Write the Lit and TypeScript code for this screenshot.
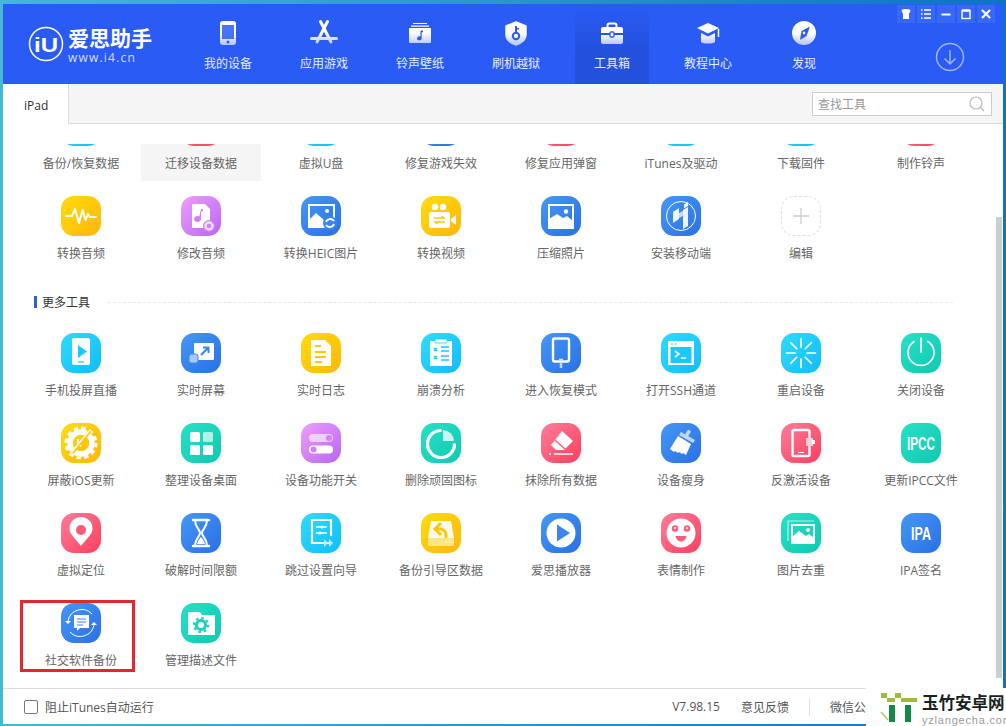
import { LitElement, html, css, svg } from 'lit';
import { customElement } from 'lit/decorators.js';

const NAV_BLUE = '#2a5cf5';

// header icons, drawn in a 32x32 box; url(#nf) is the white to lavender fade
const navIcons: Record<string, any> = {
  phone: svg`<rect x="8" y="4" width="16" height="24" rx="3" fill="url(#nf)"/>
    <rect x="10" y="8" width="12" height="14" fill="${NAV_BLUE}" opacity=".85"/>
    <circle cx="16" cy="25" r="1.5" fill="${NAV_BLUE}"/>`,
  apps: svg`<path d="M12.5 4.5 23 25M19.5 4.5 9 25M3.5 21.5h25" stroke="url(#nf)" stroke-width="3" stroke-linecap="round" fill="none"/>`,
  music: svg`<path d="M9 6h14v1H9zM7 8.500h18v1.200H7z" fill="url(#nf)"/>
    <rect x="5" y="11" width="22" height="15" rx="1" fill="url(#nf)"/>
    <path d="M16.500 13.500h2.500v1.800h-1.300v6a2.300 2 0 1 1-1.200-1.700z" fill="${NAV_BLUE}"/>`,
  shield: svg`<path d="M16 5l10 4v9c0 5-4 8-10 10-6-2-10-5-10-10V9z" fill="url(#nf)" stroke="url(#nf)" stroke-linejoin="round" stroke-width="1.500"/>
    <path d="M15 9h2v7h-2zM17 11h2v1.500h-2z" fill="${NAV_BLUE}"/>
    <circle cx="16" cy="19" r="3.200" fill="none" stroke="${NAV_BLUE}" stroke-width="2"/>`,
  tools: svg`<path d="M11.500 11V8.500a2 2 0 0 1 2-2h5a2 2 0 0 1 2 2V11" fill="none" stroke="url(#nf)" stroke-width="2"/>
    <path d="M7 10h18a2 2 0 0 1 2 2v4H5v-4a2 2 0 0 1 2-2zM5 18h22v7a2 2 0 0 1-2 2H7a2 2 0 0 1-2-2z" fill="url(#nf)"/>
    <rect x="14" y="15" width="4" height="5" rx="1" fill="#fff" stroke="${NAV_BLUE}" stroke-width="1.300"/>`,
  learn: svg`<path d="M16 6l11 5-11 5.500L5 11z" fill="url(#nf)"/>
    <path d="M9 16l7 3.500 7-3.500v9c-2 2-12 2-14 0z" fill="url(#nf)"/>
    <path d="M26.500 12v8" stroke="url(#nf)" stroke-width="1.500"/>`,
  compass: svg`<circle cx="16" cy="16" r="12" fill="url(#nf)"/>
    <path d="M22 9.500 18.500 19 12 23l1.500-9z" fill="${NAV_BLUE}"/>
    <circle cx="16" cy="16" r="1.400" fill="#dfe5fb"/>`,
};

const W = '#fff';
const YEL = '#ffc60a';
const PUR = '#cf82f6';
const BLU = '#3a86ee';
const CYA = '#1cc8fb';
const TEA = '#16d2bb';
const RED = '#fb5b78';

const rays = [0, 45, 90, 135, 180, 225, 270, 315].map(
  (a) => svg`<path d="M20 5.500v8.500" stroke="${W}" stroke-width="1.700" stroke-linecap="round" transform="rotate(${a} 20 20)"/>`
);

const glyphs: Record<string, any> = {
  wave: svg`<path d="M5 20h6l3-7 4 14 3.500-13 3 10 2.500-6 2 3h6" fill="none" stroke="${W}" stroke-width="2" stroke-linejoin="round" stroke-linecap="round"/>`,
  audioEdit: svg`<path d="M11 8h13l5 5v19H11z" fill="${W}"/>
    <path d="M20 13h1.800v2.500H20v7.500a3.500 3 0 1 1-1.800-2.600z" fill="${PUR}"/>
    <circle cx="28" cy="30" r="6" fill="${PUR}"/><circle cx="28" cy="30" r="3.500" fill="none" stroke="#f3dcfd" stroke-width="2.500"/>`,
  heic: svg`<rect x="8" y="9" width="25" height="22" fill="none" stroke="${W}" stroke-width="2"/>
    <path d="M8 24l7-7 9 8v6H8z" fill="${W}"/><circle cx="26" cy="15" r="2" fill="${W}"/>
    <circle cx="29" cy="27" r="7" fill="${BLU}"/>
    <path d="M33 25a4.500 4.500 0 0 0-8 1M25 29a4.500 4.500 0 0 0 8-1" fill="none" stroke="${W}" stroke-width="1.800"/>`,
  video: svg`<circle cx="14" cy="11" r="3.200" fill="${W}"/><circle cx="22" cy="11" r="3.200" fill="${W}"/>
    <rect x="8" y="16" width="21" height="16" rx="2" fill="${W}"/>
    <path d="M30 23l5-4v10l-5-4z" fill="${W}"/>
    <path d="M13 22h10l-2.500-2M24 26H14l2.500 2" fill="none" stroke="${YEL}" stroke-width="1.500"/>`,
  photo: svg`<rect x="8" y="9" width="24" height="23" fill="none" stroke="${W}" stroke-width="2"/>
    <path d="M8 23l8-5 6 4 4-2 6 5v7H8z" fill="${W}"/><circle cx="25" cy="15.500" r="2.200" fill="${W}"/>`,
  mobile: svg`<circle cx="20" cy="20" r="14.500" fill="none" stroke="${W}" stroke-width="1"/>
    <path d="M12 16l6-4v11l-6 4zM23 8.500l4-2.500v4l-4 2.500zM22 14l5-3v19l-5 3z" fill="${W}" opacity=".92"/>
    <path d="M18 17l4-2v5l-4 2z" fill="${W}" opacity=".7"/>`,
  cast: svg`<rect x="11" y="5" width="18" height="27" rx="2" fill="${W}"/>
    <path d="M17 12l9 6.500-9 6.500z" fill="${CYA}"/><path d="M17 29h6" stroke="${CYA}" stroke-width="1.200"/>`,
  screen: svg`<rect x="13" y="10" width="20" height="17" rx="1" fill="${W}"/>
    <rect x="8" y="21" width="9" height="9" rx="2.500" fill="#a9c9f5" stroke="${BLU}" stroke-width="1"/>
    <path d="M20 22l7-7M22 14.500h5.500V20" fill="none" stroke="${BLU}" stroke-width="2"/>`,
  log: svg`<path d="M10 7h14l6 6v20H10z" fill="${W}"/>
    <path d="M14 13h6M14 19h11M14 24h11M14 29h7" stroke="${YEL}" stroke-width="1.800"/>`,
  crash: svg`<rect x="9" y="8" width="22" height="25" fill="${W}"/><rect x="14" y="6" width="12" height="4" rx="1" fill="${W}" stroke="${CYA}" stroke-width=".8"/>
    <path d="M13 15l3 3M16 15l-3 3M13 23l3 3M16 23l-3 3M20 14h8M20 18h8M20 23h8M20 27h8" stroke="${CYA}" stroke-width="1.500"/>`,
  recover: svg`<rect x="12" y="5.500" width="16" height="23" rx="2" fill="none" stroke="${W}" stroke-width="2.400"/>
    <path d="M18 26.300h4" stroke="${W}" stroke-width="1"/>
    <path d="M20 29v6" stroke="#c0d9f8" stroke-width="2.500"/>`,
  ssh: svg`<rect x="7" y="8" width="26" height="24" fill="${W}"/><rect x="9.500" y="14" width="21" height="16" fill="${CYA}"/>
    <path d="M10 11h2M13.500 11h2" stroke="${CYA}" stroke-width="1.200"/>
    <path d="M14 18l4 3-4 3M20 25h5" fill="none" stroke="${W}" stroke-width="1.600"/>`,
  reboot: svg`${rays}`,
  power: svg`<path d="M13 8.500a13 13 0 1 0 14 0" fill="none" stroke="${W}" stroke-width="1.700" stroke-linecap="round"/>
    <path d="M20 5v14" stroke="${W}" stroke-width="1.700" stroke-linecap="round"/>`,
  noUpdate: svg`<circle cx="20" cy="20" r="11" fill="none" stroke="${W}" stroke-width="5.500"/>
    <circle cx="20" cy="20" r="15" fill="none" stroke="${W}" stroke-width="3" stroke-dasharray="4.300 3.560"/>
    <path d="M17 16v5l3 2" fill="none" stroke="${W}" stroke-width="2.200"/>
    <path d="M29 8 11 30" stroke="${YEL}" stroke-width="3.500"/><path d="M28 8 10 30" stroke="${W}" stroke-width="1.500"/>`,
  desk: svg`<rect x="9" y="9" width="10" height="10" rx="1.500" fill="${W}"/><rect x="22" y="9" width="10" height="10" rx="1.500" fill="${W}" opacity=".65"/>
    <rect x="9" y="22" width="10" height="10" rx="1.500" fill="${W}"/><rect x="22" y="22" width="10" height="10" rx="1.500" fill="${W}"/>`,
  toggles: svg`<rect x="8" y="11" width="24" height="8" rx="4" fill="${W}" opacity=".6"/><circle cx="28" cy="15" r="3" fill="${PUR}"/>
    <rect x="8" y="22.500" width="24" height="8" rx="4" fill="${W}"/><circle cx="12.500" cy="26.500" r="3" fill="${PUR}"/>`,
  stubborn: svg`<path d="M20.500 7.500a13.500 13.500 0 1 0 13 13" fill="none" stroke="${W}" stroke-width="3.200"/>
    <path d="M22 18V7a11.500 11.500 0 0 1 11 11z" fill="#c8f5ee"/>`,
  eraser: svg`<path d="M21 8l11 10-9 9H15l-5-5z" fill="${W}"/>
    <path d="M14 17l11 10" stroke="${RED}" stroke-width="1.400"/>
    <path d="M8 31h2M13 31h19" stroke="${W}" stroke-width="1.500"/>`,
  broom: svg`<path d="M27 6.500l3 2-3 5-3-2z" fill="#c0d9f8"/><path d="M20 9l14 8-2 3-14-8z" fill="#c0d9f8"/>
    <path d="M17 13l13 8-5 11-3-2-1 1-3-2-1 1-3-2-1 1-4-3z" fill="${W}"/>`,
  deact: svg`<rect x="11.500" y="7" width="17" height="26" rx="1.500" fill="none" stroke="${W}" stroke-width="2.400"/>
    <path d="M17 29.500h6" stroke="${W}" stroke-width="1"/>
    <rect x="25" y="15" width="7" height="8" fill="#fbd0d9"/><rect x="31" y="17" width="3" height="4" fill="${W}"/>`,
  pin: svg`<path d="M20 33C14 25 8.500 21.500 8.500 15.500a11.500 11.500 0 0 1 23 0C31.500 21.500 26 25 20 33z" fill="${W}"/><circle cx="20" cy="17" r="5" fill="${RED}"/>`,
  hourglass: svg`<path d="M12 7h16M12 33h16" stroke="${W}" stroke-width="2.400" stroke-linecap="round"/>
    <path d="M14 7c0 8 5 9 5 13s-5 5-5 13M26 7c0 8-5 9-5 13s5 5 5 13" fill="none" stroke="${W}" stroke-width="2"/>
    <path d="M16 31c1-4 3-6 4-7 1 1 3 3 4 7z" fill="${W}"/>`,
  skip: svg`<path d="M28 30H11V7h19v16" fill="none" stroke="${W}" stroke-width="2.200"/>
    <path d="M15 14h11M15 20h11" stroke="${W}" stroke-width="1.500"/><circle cx="21" cy="14" r="1.600" fill="${W}"/><circle cx="19" cy="20" r="1.600" fill="${W}"/>
    <path d="M23 26l4 4-4 4zM28 26l4 4-4 4z" fill="#bdf0fe"/>`,
  boot: svg`<path d="M10 8h20l3 17H7z" fill="#fffbe8"/><rect x="7" y="25" width="26" height="8" fill="#ffe680"/>
    <path d="M25 25v-3a6 6 0 0 0-6-6h-3M20 10l-6 6 6 6" fill="none" stroke="${YEL}" stroke-width="3"/>
    <path d="M25 29h1M28 29h1M31 29h.6" stroke="${W}" stroke-width="2"/>`,
  play: svg`<circle cx="20" cy="20" r="14.500" fill="${W}"/><path d="M16 11.500l13 8.500-13 8.500z" fill="${BLU}"/>`,
  face: svg`<circle cx="20" cy="20" r="14.500" fill="${W}"/>
    <circle cx="14" cy="15.500" r="3.200" fill="${RED}"/><circle cx="26" cy="15.500" r="3.200" fill="${RED}"/>
    <circle cx="14" cy="15" r="1.300" fill="#fcd"/><circle cx="26" cy="15" r="1.300" fill="#fcd"/>
    <path d="M14.500 23h11c-1 4-3 5.500-5.500 5.500s-4.500-1.500-5.500-5.500z" fill="${RED}"/>`,
  dedupe: svg`<path d="M7 28V8h26" fill="none" stroke="${W}" stroke-width="1.200" opacity=".7"/>
    <rect x="11" y="12" width="22" height="18" fill="none" stroke="${W}" stroke-width="2"/>
    <path d="M11 24l7-6 7 5 3-2 5 4v5H11z" fill="${W}"/><circle cx="27" cy="17" r="2" fill="${W}"/>`,
  social: svg`<path d="M7 18a14 14 0 0 1 24-7M33 22a14 14 0 0 1-24 7" fill="none" stroke="${W}" stroke-width="1"/>
    <path d="M4 18h6l-3 3zM30 22h6l-3-3z" fill="${W}"/>
    <path d="M13 12h15v13h-9l-3 3v-3h-3z" fill="${W}"/>
    <path d="M16 16h9M16 19h9M16 22h6" stroke="${BLU}" stroke-width="1"/>`,
  profile: svg`<path d="M7 9h12l2 3h13v20H7z" fill="${W}"/>
    <circle cx="20" cy="22" r="4.500" fill="none" stroke="${TEA}" stroke-width="3"/>
    <circle cx="20" cy="22" r="7" fill="none" stroke="${TEA}" stroke-width="2.200" stroke-dasharray="2.500 3"/>`,
  ipcc: svg`<text x="20" y="27" text-anchor="middle" textLength="28" lengthAdjust="spacingAndGlyphs" class="mark">IPCC</text>`,
  ipa: svg`<text x="20" y="27" text-anchor="middle" textLength="20" lengthAdjust="spacingAndGlyphs" class="mark">IPA</text>`,
};

const navItems = [
  ['phone', '我的设备'],
  ['apps', '应用游戏'],
  ['music', '铃声壁纸'],
  ['shield', '刷机越狱'],
  ['tools', '工具箱'],
  ['learn', '教程中心'],
  ['compass', '发现'],
];

type Tool = [string, string, string?];

const topTools: Tool[] = [
  ['备份/恢复数据', 'cyan'],
  ['迁移设备数据', 'red'],
  ['虚拟U盘', 'cyan'],
  ['修复游戏失效', 'blue'],
  ['修复应用弹窗', 'red'],
  ['iTunes及驱动', 'cyan'],
  ['下载固件', 'cyan'],
  ['制作铃声', 'red'],
  ['转换音频', 'yellow', 'wave'],
  ['修改音频', 'purple', 'audioEdit'],
  ['转换HEIC图片', 'blue', 'heic'],
  ['转换视频', 'yellow', 'video'],
  ['压缩照片', 'blue', 'photo'],
  ['安装移动端', 'blue', 'mobile'],
  ['编辑', 'add'],
];

const moreTools: Tool[] = [
  ['手机投屏直播', 'cyan', 'cast'],
  ['实时屏幕', 'blue', 'screen'],
  ['实时日志', 'yellow', 'log'],
  ['崩溃分析', 'cyan', 'crash'],
  ['进入恢复模式', 'blue', 'recover'],
  ['打开SSH通道', 'cyan', 'ssh'],
  ['重启设备', 'cyan', 'reboot'],
  ['关闭设备', 'teal', 'power'],
  ['屏蔽iOS更新', 'yellow', 'noUpdate'],
  ['整理设备桌面', 'teal', 'desk'],
  ['设备功能开关', 'purple', 'toggles'],
  ['删除顽固图标', 'teal', 'stubborn'],
  ['抹除所有数据', 'red', 'eraser'],
  ['设备瘦身', 'blue', 'broom'],
  ['反激活设备', 'red', 'deact'],
  ['更新IPCC文件', 'teal', 'ipcc'],
  ['虚拟定位', 'red', 'pin'],
  ['破解时间限额', 'blue', 'hourglass'],
  ['跳过设置向导', 'cyan', 'skip'],
  ['备份引导区数据', 'yellow', 'boot'],
  ['爱思播放器', 'blue', 'play'],
  ['表情制作', 'red', 'face'],
  ['图片去重', 'teal', 'dedupe'],
  ['IPA签名', 'blue', 'ipa'],
  ['社交软件备份', 'blue', 'social'],
  ['管理描述文件', 'teal', 'profile'],
];

@customElement('app-root')
export class AppRoot extends LitElement {
  static styles = css`
    :host {
      display: block;
      position: relative;
      width: 1006px;
      height: 726px;
      overflow: hidden;
      box-sizing: border-box;
      padding: 4px 3px 2px;
      background: linear-gradient(to right, #45b8d6, #0c74c4);
      font-family: 'Open Sans', 'Noto Sans CJK SC', sans-serif;
      font-size: 12px;
    }
    .window {
      height: 720px;
      display: flex;
      flex-direction: column;
      background: #fff;
    }

    .header {
      height: 80px;
      display: flex;
      background: #2a5cf5;
      color: #fff;
    }
    .logo {
      width: 127px;
      flex: none;
      margin-left: 25px;
      padding-top: 22px;
      display: flex;
      gap: 4px;
    }
    .logo svg { width: 36px; height: 36px; flex: none; }
    .logo-mark { font: 800 21px 'Liberation Sans', sans-serif; fill: #fff; }
    .logo-name {
      font-family: 'Noto Sans CJK SC', sans-serif;
      font-size: 21px;
      font-weight: 700;
      line-height: 22px;
      white-space: nowrap;
    }
    .logo-url {
      margin-top: 2px;
      font-size: 12px;
      line-height: 15px;
      letter-spacing: 1.2px;
      color: #d5dffc;
      white-space: nowrap;
    }
    .nav {
      display: flex;
      gap: 22px;
      margin-left: 36px;
    }
    .nav-item {
      width: 74px;
      padding-top: 13px;
      display: flex;
      flex-direction: column;
      align-items: center;
      gap: 7px;
      line-height: 16px;
      color: #e6ebfd;
    }
    .nav-item svg { width: 32px; height: 32px; }
    .nav-item.active { background: linear-gradient(#2a5cf5, #2350dc 60%); }
    .side {
      flex: 1;
      display: flex;
      flex-direction: column;
      align-items: flex-end;
    }
    .win-btns {
      display: flex;
      gap: 2px;
      margin: 1px 8px 0 0;
    }
    .win-btn {
      width: 18px;
      height: 18px;
      background: #3768f7;
    }
    .win-btn svg { width: 18px; height: 18px; display: block; }
    .download { width: 30px; height: 30px; margin: 19px 38px 0 0; }

    .tabbar {
      height: 40px;
      box-sizing: border-box;
      display: flex;
      align-items: flex-start;
      justify-content: space-between;
      background: #f5f5f5;
      border-bottom: 1px solid #dcdcdc;
    }
    .tab {
      width: 66px;
      height: 40px;
      box-sizing: border-box;
      padding-left: 21px;
      line-height: 44px;
      background: #fff;
      border-right: 1px solid #dcdcdc;
      color: #333;
    }
    .search {
      width: 180px;
      height: 24px;
      box-sizing: border-box;
      margin: 8px 11px 0 0;
      padding: 0 5px;
      display: flex;
      align-items: center;
      justify-content: space-between;
      background: #fff;
      border: 1px solid #ccc;
      color: #999;
    }
    .search svg { width: 18px; height: 18px; }

    .panel {
      flex: 1;
      min-height: 0;
      display: flex;
    }
    .main {
      flex: 1;
      min-width: 0;
      margin-top: 20px;
      overflow: hidden;
    }
    .scroll-inner {
      margin-top: -43px;
      padding-left: 18px;
    }
    .grid {
      display: grid;
      grid-template-columns: repeat(8, 120px);
      grid-auto-rows: 80px;
      row-gap: 10px;
    }
    .cell {
      display: flex;
      flex-direction: column;
      align-items: center;
      color: #666;
      white-space: nowrap;
    }
    .cell.hover { background: #f5f5f5; }
    .icon {
      width: 40px;
      height: 40px;
      margin-top: 5px;
      flex: none;
      border-radius: 13px;
    }
    .icon svg { width: 40px; height: 40px; display: block; }
    .mark { font: 700 18px 'Liberation Sans', sans-serif; fill: #fff; }
    .yellow { background: linear-gradient(135deg, #ffdc0e, #ffb60a); }
    .purple { background: linear-gradient(135deg, #ee9dfb, #b866f2); }
    .blue { background: linear-gradient(135deg, #4598f4, #2a70e6); }
    .cyan { background: linear-gradient(135deg, #2fdcfb, #12bcfb); }
    .teal { background: linear-gradient(135deg, #27e0c8, #10c9b0); }
    .red { background: linear-gradient(135deg, #ff7d98, #f9405f); }
    .add {
      box-sizing: border-box;
      border: 1px dashed #ddd;
      display: flex;
      align-items: center;
      justify-content: center;
    }
    .add svg { width: 16px; height: 16px; }
    .label { margin-top: 9px; line-height: 18px; }

    .section {
      height: 20px;
      margin: 21px 0 16px;
      display: flex;
      align-items: center;
      padding-left: 13px;
      color: #333;
    }
    .section::before {
      content: '';
      width: 3px;
      height: 12px;
      margin-right: 5px;
      background: #2a62d8;
    }
    .section::after {
      content: '';
      width: 845px;
      margin-left: 18px;
      border-top: 1px dashed #e8e8e8;
    }

    .scrollbar { width: 7px; flex: none; }
    .thumb {
      width: 6px;
      height: 461px;
      margin-top: 93px;
      background: #c9d0d2;
    }

    .footer {
      height: 36px;
      flex: none;
      box-sizing: border-box;
      display: flex;
      align-items: center;
      padding-left: 21px;
      border-top: 1px solid #dcdcdc;
      color: #555;
    }
    .check {
      width: 14px;
      height: 14px;
      box-sizing: border-box;
      margin-right: 7px;
      border: 1px solid #777;
      border-radius: 2px;
    }
    .version { margin-left: auto; }
    .feedback { margin-left: 21px; }
    .divider {
      width: 1px;
      height: 18px;
      margin: 0 20px;
      background: #e2e2e2;
    }
    .wechat { width: 173px; white-space: nowrap; }

    .annotation {
      position: absolute;
      left: 20px;
      top: 600px;
      width: 115px;
      height: 72px;
      box-sizing: border-box;
      border: 3px solid #e0282e;
    }
    .watermark {
      position: absolute;
      left: 866px;
      top: 688px;
      width: 140px;
      height: 38px;
      display: flex;
      background: #fff;
    }
    .wm-logo { width: 38px; height: 34px; margin: 1px 0 0 13px; flex: none; }
    .wm-text { margin-left: 5px; }
    .wm-name {
      font: 700 16.500px/24px 'Noto Sans CJK SC', sans-serif;
      color: #16241c;
      margin-top: 2px;
      white-space: nowrap;
    }
    .wm-url {
      font: 11px/12px 'Liberation Sans', sans-serif;
      letter-spacing: 0.8px;
      color: #9a9a9a;
      white-space: nowrap;
    }
    .defs { position: absolute; width: 0; height: 0; }
  `;

  renderCell(t: Tool) {
    const [label, tone, glyph] = t;
    const inner =
      tone === 'add'
        ? html`<svg viewBox="0 0 16 16"><path d="M8 0v16M0 8h16" stroke="#ccc" stroke-width="1.300"/></svg>`
        : glyph
          ? html`<svg viewBox="0 0 40 40">${glyphs[glyph]}</svg>`
          : '';
    return html`<div class="cell ${label === '迁移设备数据' ? 'hover' : ''}">
      <div class="icon ${tone}">${inner}</div>
      <div class="label">${label}</div>
    </div>`;
  }

  render() {
    return html`
      <svg class="defs">
        <defs>
          <linearGradient id="nf" gradientUnits="userSpaceOnUse" x1="0" y1="4" x2="0" y2="28">
            <stop offset="0" stop-color="#fff" />
            <stop offset=".5" stop-color="#fff" />
            <stop offset="1" stop-color="#b4c3fa" />
          </linearGradient>
        </defs>
      </svg>
      <div class="window">
        <div class="header">
          <div class="logo">
            <svg viewBox="0 0 36 36">
              <circle cx="18" cy="18" r="16.500" fill="none" stroke="#fff" stroke-width="1.500" />
              <text x="18" y="25.500" text-anchor="middle" textLength="24" lengthAdjust="spacingAndGlyphs" class="logo-mark">iU</text>
            </svg>
            <div>
              <div class="logo-name">爱思助手</div>
              <div class="logo-url">www.i4.cn</div>
            </div>
          </div>
          <div class="nav">
            ${navItems.map(
              ([ic, label]) => html`<div class="nav-item ${label === '工具箱' ? 'active' : ''}">
                <svg viewBox="0 0 32 32">${navIcons[ic]}</svg>
                <div>${label}</div>
              </div>`
            )}
          </div>
          <div class="side">
            <div class="win-btns">
              <div class="win-btn"><svg viewBox="0 0 18 18"><path d="M4.500 5 7 4h4l2.500 1-.8 3-.7-.3V14H6V7.700l-.7.3z" fill="#fff"/></svg></div>
              <div class="win-btn"><svg viewBox="0 0 18 18"><path d="M4 5h1.500M7 5h7M4 9h1.500M7 9h7M4 13h1.500M7 13h7" stroke="#fff" stroke-width="1.600"/></svg></div>
              <div class="win-btn"><svg viewBox="0 0 18 18"><path d="M4.500 9.500h9" stroke="#fff" stroke-width="2"/></svg></div>
              <div class="win-btn"><svg viewBox="0 0 18 18"><rect x="5" y="5.500" width="8" height="8" fill="none" stroke="#fff" stroke-width="1.400"/><path d="M5 5.500h8" stroke="#fff" stroke-width="2.500"/></svg></div>
              <div class="win-btn"><svg viewBox="0 0 18 18"><path d="M5 5l8 8M13 5l-8 8" stroke="#fff" stroke-width="2.200"/></svg></div>
            </div>
            <svg class="download" viewBox="0 0 30 30">
              <circle cx="15" cy="15" r="13.500" fill="none" stroke="#9db5fa" stroke-width="1.500" />
              <path d="M15 8v14M9.500 16.500 15 22l5.500-5.500" fill="none" stroke="#9db5fa" stroke-width="1.500" />
            </svg>
          </div>
        </div>

        <div class="tabbar">
          <div class="tab">iPad</div>
          <div class="search">
            <span>查找工具</span>
            <svg viewBox="0 0 18 18">
              <circle cx="8" cy="8" r="6" fill="none" stroke="#bbb" stroke-width="1.100" />
              <path d="M12.500 12.500 16 16" stroke="#bbb" stroke-width="1.100" />
            </svg>
          </div>
        </div>

        <div class="panel">
          <div class="main">
            <div class="scroll-inner">
              <div class="grid">${topTools.map((t) => this.renderCell(t))}</div>
              <div class="section">更多工具</div>
              <div class="grid">${moreTools.map((t) => this.renderCell(t))}</div>
            </div>
          </div>
          <div class="scrollbar"><div class="thumb"></div></div>
        </div>

        <div class="footer">
          <div class="check"></div>
          <span>阻止iTunes自动运行</span>
          <span class="version">V7.98.15</span>
          <span class="feedback">意见反馈</span>
          <div class="divider"></div>
          <span class="wechat">微信公众号</span>
        </div>
      </div>

      <div class="annotation"></div>
      <div class="watermark">
        <svg class="wm-logo" viewBox="0 0 38 34">
          <path d="M2 4h6v5H2zM8 9h8v4H8zM16 4h6v5h-6zM22 9h8v4h-8zM30 9h8v4h-8z" fill="#9dbb3c" />
          <path d="M10 16h6v17h-6zM26 16h6v17h-6z" fill="#14894a" />
          <path d="M2 23l7 8" stroke="#b6c86a" stroke-width="1.500" />
        </svg>
        <div class="wm-text">
          <div class="wm-name">玉竹安卓网</div>
          <div class="wm-url">yzlangecha.com</div>
        </div>
      </div>
    `;
  }
}
